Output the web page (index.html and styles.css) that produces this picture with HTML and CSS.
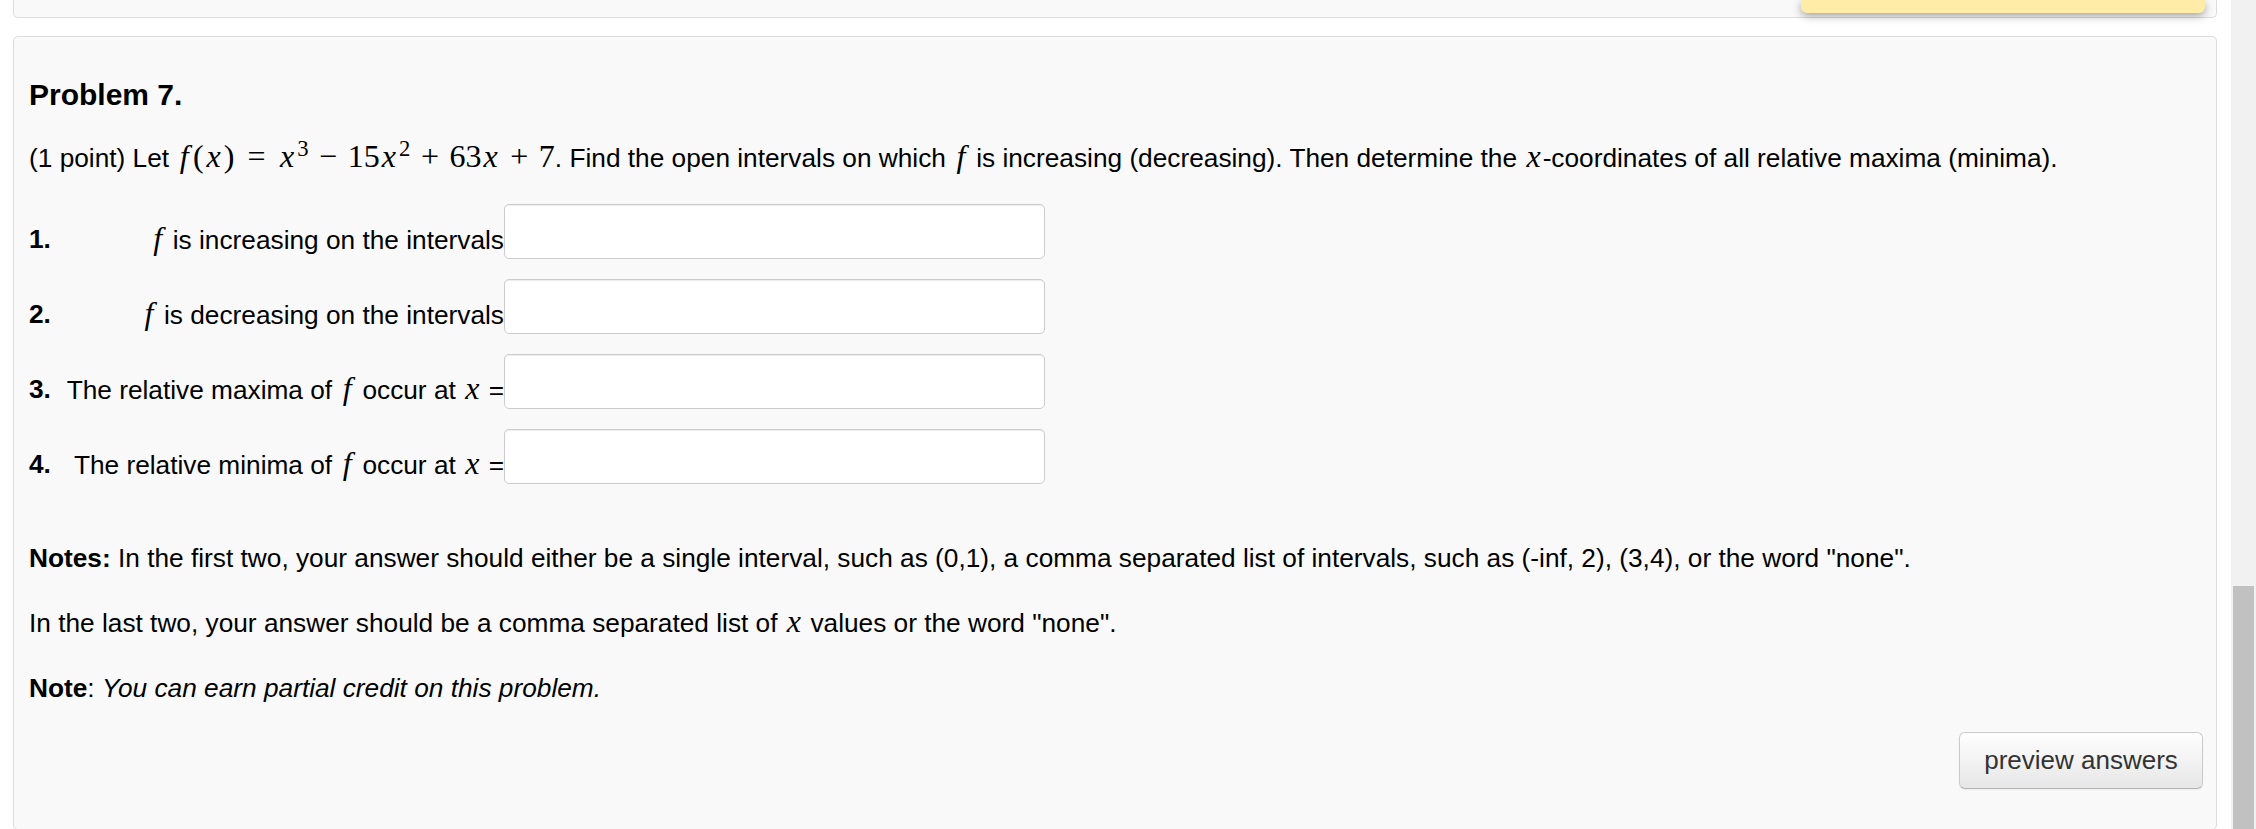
FILE: index.html
```html
<!DOCTYPE html>
<html lang="en">
<head>
<meta charset="utf-8">
<title>Problem 7</title>
<link rel="stylesheet" href="styles.css">
</head>
<body>
<div class="page">
  <div class="main">
    <div class="msg"></div>
    <div class="card card-top"></div>
    <div class="card problem">
      <h3 class="title">Problem 7.</h3>
      <p class="stmt">(1 point) Let <span class="math"><span class="mi w-f">f</span><span class="mo w-p">(</span><span class="mi w-x">x</span><span class="mo w-p">)</span><span class="mo rel">=</span><span class="mi w-x">x</span><span class="sup">3</span><span class="mo bin">&minus;</span><span class="mn">15</span><span class="mi w-x">x</span><span class="sup">2</span><span class="mo bin">+</span><span class="mn">63</span><span class="mi w-x">x</span><span class="mo bin">+</span><span class="mn">7</span></span>. Find the open intervals on which <span class="math"><span class="mi w-f">f</span></span> is increasing (decreasing). Then determine the <span class="math"><span class="mi w-x">x</span></span>-coordinates of all relative maxima (minima).</p>

      <div class="answers">
        <span class="num">1.</span>
        <span class="lbl"><span class="math"><span class="mi w-f">f</span></span> is increasing on the intervals</span>
        <input class="ans" type="text">

        <span class="num">2.</span>
        <span class="lbl"><span class="math"><span class="mi w-f">f</span></span> is decreasing on the intervals</span>
        <input class="ans" type="text">

        <span class="num">3.</span>
        <span class="lbl">The relative maxima of <span class="math"><span class="mi w-f">f</span></span> occur at <span class="math"><span class="mi w-x">x</span></span> =</span>
        <input class="ans" type="text">

        <span class="num">4.</span>
        <span class="lbl">The relative minima of <span class="math"><span class="mi w-f">f</span></span> occur at <span class="math"><span class="mi w-x">x</span></span> =</span>
        <input class="ans" type="text">
      </div>

      <p class="para notes"><b>Notes:</b> In the first two, your answer should either be a single interval, such as (0,1), a comma separated list of intervals, such as (-inf, 2), (3,4), or the word "none".</p>
      <p class="para">In the last two, your answer should be a comma separated list of <span class="math"><span class="mi w-x">x</span></span> values or the word "none".</p>
      <p class="para"><b>Note</b>: <i>You can earn partial credit on this problem.</i></p>

      <div class="actions">
        <button class="btn" type="button">preview answers</button>
      </div>
    </div>
  </div>
  <div class="scrollbar"><div class="thumb"></div></div>
</div>
</body>
</html>
```

FILE: styles.css
```css
html, body {
  margin: 0;
  padding: 0;
  background: #ffffff;
}

body {
  font-family: "Liberation Sans", Arial, sans-serif;
  font-size: 26.25px;
  color: #000000;
}

.page {
  display: flex;
  width: 2256px;
  height: 829px;
  overflow: hidden;
}

.main {
  position: relative;
  flex: 1;
  padding: 0 14px 0 13px;
  min-width: 0;
}

.card {
  background: #f9f9f9;
  border: 1px solid #dcdcdc;
  border-radius: 5px;
}

.card-top {
  height: 17px;
  border-top: none;
  border-radius: 0 0 5px 5px;
  margin-bottom: 18px;
}

.msg {
  position: absolute;
  top: 0;
  left: 1801px;
  width: 404px;
  height: 13px;
  background: #ffeca7;
  border-radius: 0 0 6px 6px;
  box-shadow: 0 3px 8px rgba(0, 0, 0, 0.35);
  z-index: 2;
}

.problem {
  padding: 40px 13px 40px 15px;
}

.title {
  margin: 0;
  font-size: 30px;
  font-weight: bold;
  line-height: 36px;
}

.stmt {
  margin: 27px 0 0 0;
  line-height: 36px;
  white-space: nowrap;
}

.math {
  font-family: "Liberation Serif", "Times New Roman", serif;
  font-size: 32px;
  line-height: 1;
  white-space: nowrap;
}

.mi {
  display: inline-block;
  font-style: italic;
  text-align: center;
}

.mo {
  display: inline-block;
  text-align: center;
}

.w-f { width: 0.49em; }
.w-x { width: 0.572em; }
.w-p { width: 0.389em; }

.rel {
  width: 0.778em;
  margin: 0 0.2778em;
}

.bin {
  width: 0.778em;
  margin: 0 0.222em;
}

.sup {
  font-size: 0.707em;
  line-height: 0;
  vertical-align: 0.48em;
  padding-left: 0.05em;
}

.answers {
  margin-top: 28px;
  display: grid;
  grid-template-columns: 37px 438px 541px;
  row-gap: 20px;
  align-items: end;
}

.num {
  font-weight: bold;
  line-height: 36px;
  padding-bottom: 2px;
}

.lbl {
  text-align: right;
  line-height: 36px;
  padding-bottom: 1px;
  white-space: nowrap;
}

.ans {
  box-sizing: border-box;
  width: 541px;
  height: 55px;
  margin: 0;
  padding: 4px 10px;
  background: #ffffff;
  border: 1px solid #cccccc;
  border-radius: 5px;
  box-shadow: inset 0 1px 1px rgba(0, 0, 0, 0.075);
  font-family: "Liberation Sans", Arial, sans-serif;
  font-size: 26px;
}

.para {
  margin: 29px 0 0 0;
  line-height: 36px;
  white-space: nowrap;
}

.notes {
  margin-top: 56px;
}

.actions {
  margin-top: 26px;
  display: flex;
  justify-content: flex-end;
}

.btn {
  box-sizing: border-box;
  width: 244px;
  height: 57px;
  padding: 0 20px;
  font-family: "Liberation Sans", Arial, sans-serif;
  font-size: 26px;
  color: #333333;
  background: linear-gradient(to bottom, #ffffff, #e6e6e6);
  border: 1px solid #cccccc;
  border-bottom-color: #b3b3b3;
  border-radius: 6px;
  box-shadow: inset 0 1px 0 rgba(255, 255, 255, 0.2), 0 1px 2px rgba(0, 0, 0, 0.05);
}

.scrollbar {
  width: 25px;
  flex: none;
  background: #f1f1f1;
  display: flex;
  flex-direction: column;
}

.thumb {
  margin: 586px 2px 0 2px;
  flex: 1;
  background: #c1c1c1;
}
```
